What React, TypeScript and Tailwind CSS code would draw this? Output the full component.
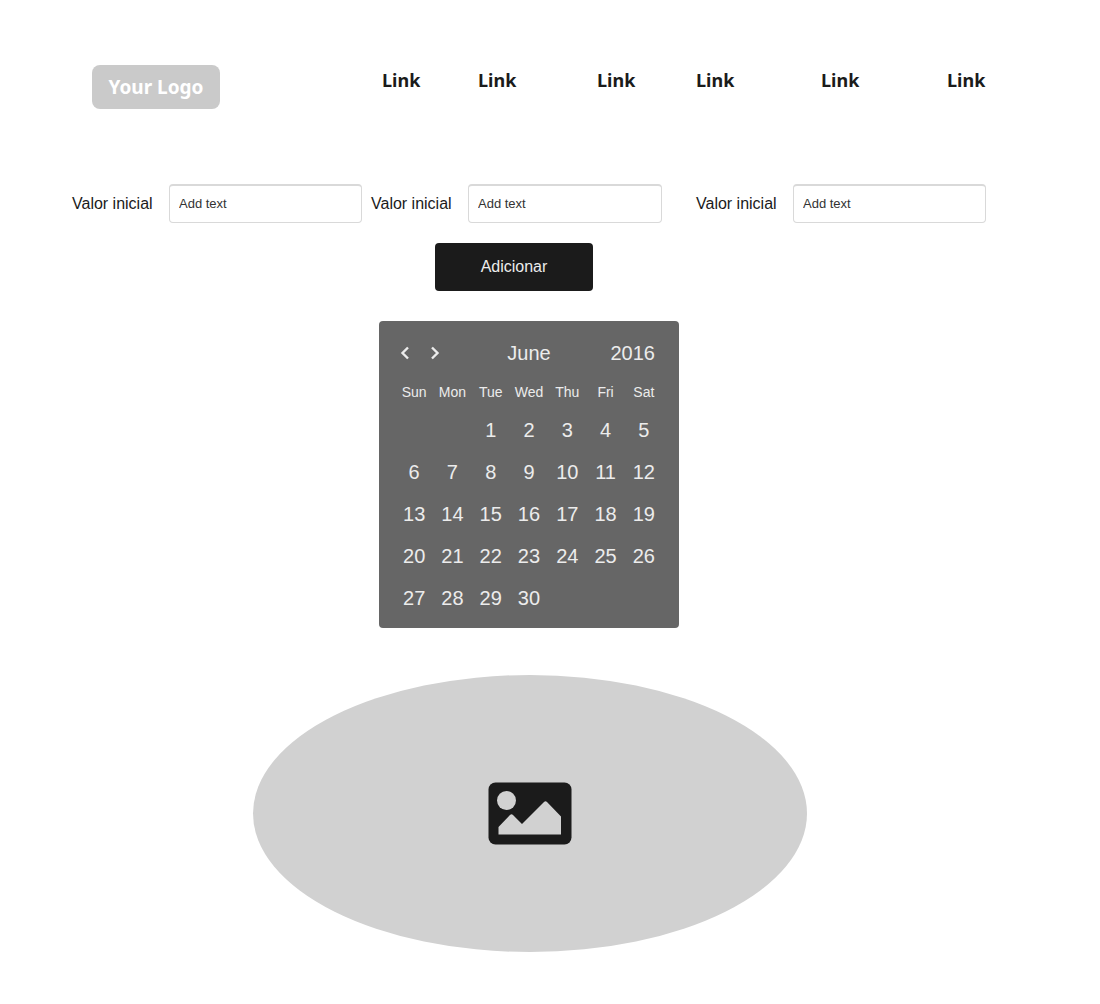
import { useState } from "react";

const links = ["Link", "Link", "Link", "Link", "Link", "Link"];

const weekdays = ["Sun", "Mon", "Tue", "Wed", "Thu", "Fri", "Sat"];

const weeks: (number | null)[][] = [
  [null, null, 1, 2, 3, 4, 5],
  [6, 7, 8, 9, 10, 11, 12],
  [13, 14, 15, 16, 17, 18, 19],
  [20, 21, 22, 23, 24, 25, 26],
  [27, 28, 29, 30, null, null, null],
];

function Header() {
  return (
    <header className="flex items-start pt-[65px] pr-[115px] pl-[92px] font-['Noto_Sans',sans-serif] font-bold">
      <a
        href="#"
        className="flex h-11 w-32 shrink-0 items-center justify-center rounded-lg bg-[#cacaca] text-[19px] whitespace-nowrap text-white"
      >
        Your Logo
      </a>
      <nav className="ml-[162px] grid flex-1 grid-cols-[96fr_119fr_99fr_125fr_126fr_38px] pt-px text-lg text-[#1b1b1b]">
        {links.map((text, i) => (
          <a key={i} href="#">
            {text}
          </a>
        ))}
      </nav>
    </header>
  );
}

function Field({ id }: { id: string }) {
  const [value, setValue] = useState("Add text");
  return (
    <div className="flex items-center">
      <label htmlFor={id} className="w-[97px] shrink-0 text-base whitespace-nowrap text-[#1b1b1b]">
        Valor inicial
      </label>
      <input
        id={id}
        type="text"
        value={value}
        onChange={(e) => setValue(e.target.value)}
        className="h-[39px] w-full min-w-0 rounded-sm border border-t-2 border-[#d9d9d9] bg-white px-[9px] pb-0.5 text-[13px] text-[#333333]"
      />
    </div>
  );
}

function Chevron({ d }: { d: string }) {
  return (
    <svg viewBox="0 0 10 14" className="h-3.5 w-2.5" fill="none" stroke="currentColor" strokeWidth="2.4">
      <path d={d} />
    </svg>
  );
}

function Calendar() {
  return (
    <section
      aria-label="Calendar"
      className="mt-[30px] w-[300px] rounded-sm bg-[#666666] px-4 pt-[11px] pb-[9px] text-xl text-[#ececec]"
    >
      <div className="grid h-[42px] grid-cols-3 items-center px-[5px]">
        <div className="flex gap-5">
          <button type="button" aria-label="Previous month">
            <Chevron d="M8 1.5 2.5 7 8 12.5" />
          </button>
          <button type="button" aria-label="Next month">
            <Chevron d="M2 1.5 7.5 7 2 12.5" />
          </button>
        </div>
        <span className="text-center">June</span>
        <span className="pr-[3px] text-right">2016</span>
      </div>
      <table className="w-full table-fixed border-collapse text-center">
        <thead>
          <tr className="h-[35px] text-sm">
            {weekdays.map((day) => (
              <th key={day} scope="col" className="p-0 text-center font-normal">
                {day}
              </th>
            ))}
          </tr>
        </thead>
        <tbody>
          {weeks.map((week, i) => (
            <tr key={i} className="h-[42px]">
              {week.map((day, j) => (
                <td key={j} className="p-0">
                  {day}
                </td>
              ))}
            </tr>
          ))}
        </tbody>
      </table>
    </section>
  );
}

function ImagePlaceholder() {
  return (
    <div className="mt-[47px] ml-0.5 flex aspect-[2/1] w-full max-w-[554px] items-center justify-center rounded-[50%] bg-[#d1d1d1]">
      <svg viewBox="0 0 84 63" className="w-[84px]" role="img" aria-label="Image">
        <rect x="0.5" y="0.5" width="83" height="62" rx="7" fill="#1b1b1b" />
        <circle cx="18.5" cy="18.5" r="9.5" fill="#d1d1d1" />
        <path d="M10.5 52.5V45L22 33q1.5-1.5 3 0L34 42 56 20q1.5-1.5 3 0L73 34.5V52.5Z" fill="#d1d1d1" />
      </svg>
    </div>
  );
}

export default function App() {
  return (
    <div className="min-h-screen bg-white pb-12 font-['Liberation_Sans',Arial,sans-serif]">
      <Header />
      <main className="flex flex-col items-center pt-[75px] pr-[114px] pl-[72px]">
        <form className="flex w-full flex-col items-center" onSubmit={(e) => e.preventDefault()}>
          <div className="grid w-full grid-cols-[290fr_291fr_315fr] gap-x-[9px]">
            <Field id="valor-1" />
            <Field id="valor-2" />
            <div className="pl-[25px]">
              <Field id="valor-3" />
            </div>
          </div>
          <button
            type="submit"
            className="mt-5 mr-[30px] h-12 w-[158px] rounded-sm bg-[#1b1b1b] text-base text-[#ececec]"
          >
            Adicionar
          </button>
        </form>
        <Calendar />
        <ImagePlaceholder />
      </main>
    </div>
  );
}
